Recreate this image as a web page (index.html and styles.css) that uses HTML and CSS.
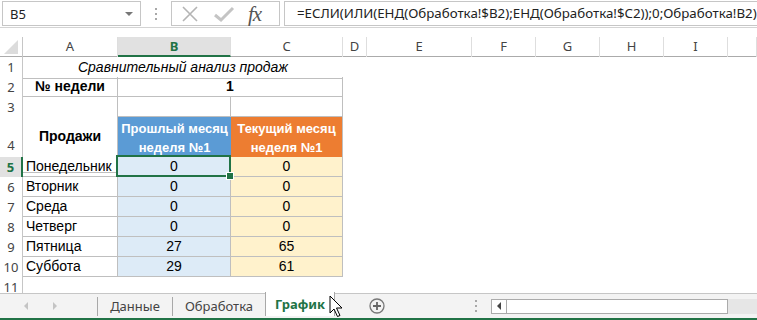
FILE: index.html
```html
<!DOCTYPE html>
<html lang="ru">
<head>
    <meta charset="UTF-8">
    <title>График</title>
    <link rel="stylesheet" href="styles.css">
</head>
<body>
    <div class="formula-bar">
        <div class="name-box"><span>B5</span><span class="drop"></span></div>
        <div class="grip"><i></i><i></i><i></i></div>
        <div class="fx-buttons">
            <svg class="btn-icon" width="20" height="18" viewBox="0 0 20 18">
                <path d="M3 2 L17 16 M17 2 L3 16" stroke="#b4b4b4" stroke-width="1.6" fill="none"/>
            </svg>
            <svg class="btn-icon" width="24" height="18" viewBox="0 0 24 18">
                <path d="M3 10 L9 15 L21 3" stroke="#c4c4c4" stroke-width="3" fill="none"/>
            </svg>
            <span class="fx">fx</span>
        </div>
        <div class="formula">=ЕСЛИ(ИЛИ(ЕНД(Обработка!$B2);ЕНД(Обработка!$C2));0;Обработка!B2)</div>
    </div>

    <div class="sheet">
        <div class="row col-heads">
            <div class="corner">
                <svg width="14" height="14" viewBox="0 0 14 14"><path d="M0 14 L14 0 L14 14 Z" fill="#dcdcdc"/></svg>
            </div>
            <div class="ch">A</div>
            <div class="ch active">B</div>
            <div class="ch">C</div>
            <div class="ch">D</div>
            <div class="ch">E</div>
            <div class="ch">F</div>
            <div class="ch">G</div>
            <div class="ch">H</div>
            <div class="ch">I</div>
            <div class="ch"></div>
        </div>

        <div class="row">
            <div class="rh">1</div>
            <div class="c span3 title bb">Сравнительный анализ продаж</div>
        </div>
        <div class="row">
            <div class="rh">2</div>
            <div class="c bold center box">№ недели</div>
            <div class="c span2 bold center box">1</div>
        </div>
        <div class="row">
            <div class="rh">3</div>
            <div class="c br"></div>
            <div class="c box"></div>
            <div class="c box"></div>
        </div>
        <div class="row tall">
            <div class="rh bottom">4</div>
            <div class="c bold center box">Продажи</div>
            <div class="c head-blue">Прошлый месяц<br>неделя №1</div>
            <div class="c head-orange">Текущий месяц<br>неделя №1</div>
        </div>
        <div class="row">
            <div class="rh active">5</div>
            <div class="c box name">Понедельник</div>
            <div class="c box blue sel">0</div>
            <div class="c box yellow">0</div>
        </div>
        <div class="row">
            <div class="rh">6</div>
            <div class="c box name">Вторник</div>
            <div class="c box blue">0</div>
            <div class="c box yellow">0</div>
        </div>
        <div class="row">
            <div class="rh">7</div>
            <div class="c box name">Среда</div>
            <div class="c box blue">0</div>
            <div class="c box yellow">0</div>
        </div>
        <div class="row">
            <div class="rh">8</div>
            <div class="c box name">Четверг</div>
            <div class="c box blue">0</div>
            <div class="c box yellow">0</div>
        </div>
        <div class="row">
            <div class="rh">9</div>
            <div class="c box name">Пятница</div>
            <div class="c box blue">27</div>
            <div class="c box yellow">65</div>
        </div>
        <div class="row">
            <div class="rh">10</div>
            <div class="c box name">Суббота</div>
            <div class="c box blue">29</div>
            <div class="c box yellow">61</div>
        </div>
        <div class="row short">
            <div class="rh">11</div>
        </div>
    </div>

    <div class="tabs">
        <div class="tab-nav">
            <span class="arr left"></span>
            <span class="arr right"></span>
        </div>
        <div class="sep"></div>
        <div class="tab t-data">Данные</div>
        <div class="sep"></div>
        <div class="tab t-proc">Обработка</div>
        <div class="tab current">График</div>
        <div class="add">
            <svg width="16" height="16" viewBox="0 0 16 16">
                <circle cx="8" cy="8" r="7" stroke="#777" stroke-width="1.3" fill="none"/>
                <path d="M8 4 V12 M4 8 H12" stroke="#666" stroke-width="1.8"/>
            </svg>
        </div>
        <div class="grip tab-grip"><i></i><i></i><i></i></div>
        <div class="hscroll">
            <div class="hs-btn"><span class="hs-arr"></span></div>
            <div class="hs-thumb"></div>
            <div class="hs-track"></div>
        </div>
        <svg class="cursor" width="16" height="24" viewBox="0 0 16 24">
            <path d="M1 1 L1 18 L5 14 L8.5 21.5 L11 20.5 L7.5 13 L13 13 Z" fill="#fff" stroke="#000" stroke-width="1" stroke-linejoin="round"/>
        </svg>
    </div>
</body>
</html>
```

FILE: styles.css
```css
* {
    box-sizing: border-box;
}

body {
    margin: 0;
    width: 757px;
    height: 320px;
    overflow: hidden;
    background-color: #fff;
    font-family: "Liberation Sans", Arial, sans-serif;
    color: #000;
}

/* formula bar */
.formula-bar {
    display: flex;
    align-items: center;
    height: 28px;
    padding: 1px 0 1px 2px;
    border-bottom: 1px solid #d4d4d4;
    font-family: "Noto Sans", sans-serif;
    font-size: 13px;
    color: #222;
}

.name-box {
    display: flex;
    align-items: center;
    justify-content: space-between;
    width: 139px;
    height: 25px;
    padding: 0 7px 0 7px;
    border: 1px solid #c6c6c6;
}

.drop {
    width: 0;
    height: 0;
    border-left: 4px solid transparent;
    border-right: 4px solid transparent;
    border-top: 4px solid #777;
}

.grip {
    display: flex;
    flex-direction: column;
    align-items: center;
    gap: 3px;
    width: 30px;
}

.grip i {
    display: block;
    width: 2px;
    height: 2px;
    background-color: #a8a8a8;
}

.fx-buttons {
    display: flex;
    align-items: center;
    width: 109px;
    height: 25px;
    padding-left: 8px;
    border: 1px solid #c6c6c6;
}

.btn-icon {
    margin-right: 12px;
}

.fx {
    font-family: "Liberation Serif", serif;
    font-style: italic;
    font-size: 21px;
    color: #555;
    letter-spacing: -1px;
    line-height: 20px;
}

.formula {
    flex: 1;
    height: 25px;
    margin-left: 4px;
    margin-right: -3px;
    padding-left: 12px;
    border: 1px solid #c6c6c6;
    font-size: 13.3px;
    line-height: 22px;
    white-space: nowrap;
    overflow: hidden;
}

/* grid */
.row {
    display: grid;
    grid-template-columns: 23px 95px 113px 112px 24px 105px 64px 64px 64px 64px 1fr;
    height: 20px;
}

.row.tall {
    height: 40px;
}

.row.short {
    height: 16px;
    overflow: hidden;
}

.col-heads {
    height: 29px;
    padding-top: 9px;
    border-bottom: 1px solid #ababab;
    font-family: "Noto Sans", sans-serif;
    font-size: 13px;
    color: #444;
}

.corner {
    display: flex;
    align-items: flex-end;
    justify-content: flex-end;
    padding: 0 4px 3px 0;
    border-right: 1px solid #c6c6c6;
}

.ch {
    text-align: center;
    line-height: 19px;
    border-right: 1px solid #dedede;
}

.ch.active {
    background-color: #e1e1e1;
    border-bottom: 2px solid #217346;
    color: #217346;
    font-weight: bold;
    line-height: 18px;
}

.rh {
    grid-column: 1;
    border-right: 1px solid #c6c6c6;
    font-family: "Noto Sans", sans-serif;
    font-size: 13px;
    color: #444;
    text-align: center;
    line-height: 20px;
}

.rh.bottom {
    line-height: 56px;
}

.rh.active {
    background-color: #e1e1e1;
    border-right: 2px solid #217346;
    color: #217346;
    font-weight: bold;
}

.c {
    font-size: 14px;
    line-height: 19px;
    white-space: nowrap;
}

.span3 {
    grid-column: span 3;
}

.span2 {
    grid-column: span 2;
}

.bb {
    border-bottom: 1px solid #bfbfbf;
}

.br {
    border-right: 1px solid #bfbfbf;
}

.box {
    border-right: 1px solid #bfbfbf;
    border-bottom: 1px solid #bfbfbf;
}

.title {
    font-style: italic;
    text-align: center;
    line-height: 21px;
}

.bold {
    font-weight: bold;
}

.center {
    text-align: center;
}

.tall .bold {
    line-height: 39px;
}

.name {
    padding-left: 3px;
}

.blue,
.yellow {
    text-align: center;
}

.blue {
    background-color: #ddebf7;
}

.yellow {
    background-color: #fff2cc;
}

.head-blue,
.head-orange {
    padding-top: 2px;
    text-align: center;
    color: #fff;
    font-size: 13px;
    font-weight: bold;
    line-height: 19px;
}

.head-blue {
    background-color: #5b9bd5;
}

.head-orange {
    background-color: #ed7d31;
    border-right: 1px solid #bfbfbf;
}

.sel {
    position: relative;
}

.sel::after {
    content: "";
    position: absolute;
    left: -2px;
    top: -2px;
    right: -1px;
    bottom: -1px;
    border: 2px solid #217346;
}

.sel::before {
    content: "";
    position: absolute;
    right: -4px;
    bottom: -4px;
    width: 6px;
    height: 6px;
    background-color: #217346;
    border: 1px solid #fff;
    z-index: 1;
}

/* sheet tabs */
.tabs {
    position: relative;
    display: flex;
    align-items: center;
    height: 27px;
    background-color: #f3f3f3;
    border-top: 1px solid #c6c6c6;
    border-bottom: 2px solid #217346;
    font-family: "Noto Sans", sans-serif;
    font-size: 13px;
    color: #444;
}

.tab-nav {
    display: flex;
    align-items: center;
    width: 97px;
    padding-left: 24px;
}

.arr {
    width: 0;
    height: 0;
    border-top: 4px solid transparent;
    border-bottom: 4px solid transparent;
}

.arr.left {
    border-right: 4px solid #c4c4c4;
}

.arr.right {
    margin-left: 25px;
    border-left: 4px solid #c4c4c4;
}

.sep {
    width: 1px;
    height: 19px;
    background-color: #a8a8a8;
}

.tab {
    text-align: center;
    line-height: 22px;
}

.t-data {
    width: 74px;
}

.t-proc {
    width: 92px;
}

.tab.current {
    align-self: flex-start;
    width: 70px;
    height: 24px;
    margin-top: -2px;
    background-color: #fff;
    border-left: 1px solid #a8a8a8;
    border-right: 1px solid #a8a8a8;
    color: #217346;
    font-weight: bold;
    line-height: 24px;
    box-shadow: inset 0 -3px 0 #fff, inset -5px -5px 0 #fff, inset 0 -5px 0 #217346;
}

.add {
    display: flex;
    margin-left: 34px;
}

.tab-grip {
    width: 30px;
    margin-left: 76px;
}

.hscroll {
    display: flex;
    flex: 1;
    height: 15px;
}

.hs-btn {
    display: flex;
    align-items: center;
    justify-content: center;
    width: 15px;
    background-color: #fff;
    border: 1px solid #ababab;
    border-right: none;
}

.hs-arr {
    width: 0;
    height: 0;
    border-top: 4px solid transparent;
    border-bottom: 4px solid transparent;
    border-right: 4px solid #444;
}

.hs-thumb {
    width: 222px;
    background-color: #fff;
    border: 1px solid #ababab;
}

.hs-track {
    flex: 1;
    background-color: #e6e6e6;
}

.cursor {
    position: absolute;
    left: 329px;
    top: 1px;
}
```
